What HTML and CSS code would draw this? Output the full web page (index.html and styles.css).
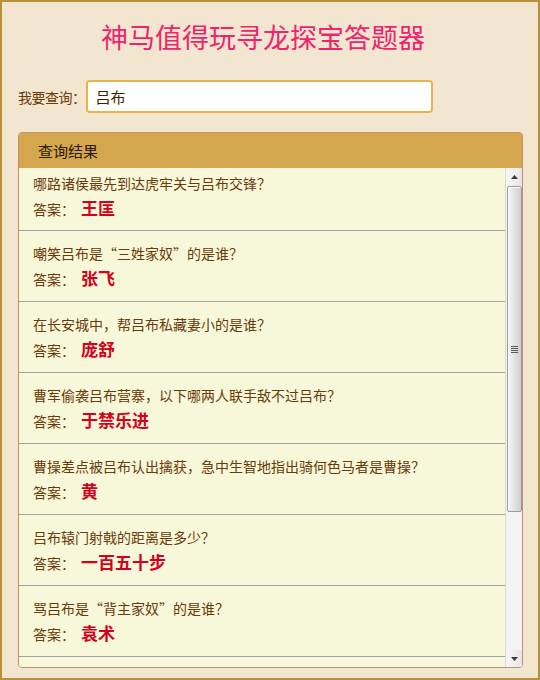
FILE: index.html
```html
<!DOCTYPE html>
<html lang="zh-CN">
<head>
  <meta charset="UTF-8">
  <title>神马值得玩寻龙探宝答题器</title>
  <link rel="stylesheet" href="styles.css">
</head>
<body>
  <div class="page">
    <h1 class="title">神马值得玩寻龙探宝答题器</h1>

    <!-- 查询框 -->
    <div class="search">
      <label for="keyword">我要查询：</label>
      <input id="keyword" type="text" value="吕布">
    </div>

    <!-- 查询结果 -->
    <div class="panel">
      <div class="panel-head">查询结果</div>
      <div class="panel-body">
        <div class="list">
          <div class="item">
            <p class="q">哪路诸侯最先到达虎牢关与吕布交锋？</p>
            <p class="a">答案：<b>王匡</b></p>
          </div>
          <div class="item">
            <p class="q">嘲笑吕布是“三姓家奴”的是谁？</p>
            <p class="a">答案：<b>张飞</b></p>
          </div>
          <div class="item">
            <p class="q">在长安城中，帮吕布私藏妻小的是谁？</p>
            <p class="a">答案：<b>庞舒</b></p>
          </div>
          <div class="item">
            <p class="q">曹军偷袭吕布营寨，以下哪两人联手敌不过吕布？</p>
            <p class="a">答案：<b>于禁乐进</b></p>
          </div>
          <div class="item">
            <p class="q">曹操差点被吕布认出擒获，急中生智地指出骑何色马者是曹操？</p>
            <p class="a">答案：<b>黄</b></p>
          </div>
          <div class="item">
            <p class="q">吕布辕门射戟的距离是多少？</p>
            <p class="a">答案：<b>一百五十步</b></p>
          </div>
          <div class="item">
            <p class="q">骂吕布是“背主家奴”的是谁？</p>
            <p class="a">答案：<b>袁术</b></p>
          </div>
        </div>

        <!-- 滚动条 -->
        <div class="scrollbar">
          <div class="sb-btn">
            <svg width="7" height="4" viewBox="0 0 7 4"><path d="M3.5 0 L7 4 L0 4 Z" fill="#3c3c3c"/></svg>
          </div>
          <div class="sb-track">
            <div class="sb-thumb">
              <span class="grip"></span>
            </div>
          </div>
          <div class="sb-btn sb-down">
            <svg width="7" height="4" viewBox="0 0 7 4"><path d="M0 0 L7 0 L3.5 4 Z" fill="#3c3c3c"/></svg>
          </div>
        </div>
      </div>
    </div>
  </div>
</body>
</html>
```

FILE: styles.css
```css
* {
  box-sizing: border-box;
}
body {
  margin: 0;
  font-family: "Noto Sans CJK SC", "Liberation Sans", sans-serif;
}
.page {
  width: 540px;
  height: 680px;
  border: 2px solid #b8903a;
  background: #f2e6d1;
  overflow: hidden;
}
.title {
  margin: 0;
  padding: 18px 14px 0 0;
  line-height: 34px;
  font-size: 27px;
  font-weight: normal;
  color: #f0236c;
  text-align: center;
}
.search {
  display: flex;
  align-items: center;
  margin-top: 26px;
  padding-left: 16px;
}
.search label {
  font-size: 14px;
  letter-spacing: -0.5px;
  color: #6b3a0a;
}
.search input {
  width: 347px;
  height: 33px;
  padding: 0 8px;
  border: 2px solid #e9b24a;
  border-radius: 4px;
  background: #fff;
  font-family: inherit;
  font-size: 15px;
  color: #3a2500;
  outline: none;
}
.panel {
  margin: 19px 15px 0 16px;
  height: 536px;
  border: 1px solid #c4906c;
  border-radius: 4px;
  overflow: hidden;
  display: flex;
  flex-direction: column;
}
.panel-head {
  height: 35px;
  line-height: 35px;
  padding-left: 19px;
  background: #d4a64e;
  font-size: 15px;
  color: #2a1a00;
}
.panel-body {
  flex: 1;
  display: flex;
  min-height: 0;
  background: #f7f7d9;
}
.list {
  flex: 1;
  overflow: hidden;
}
.item {
  height: 71px;
  padding: 11px 14px 0;
  border-bottom: 1px solid #a3a3a3;
}
.item:first-child {
  height: 63px;
  padding-top: 4px;
}
.item p {
  margin: 0;
  white-space: nowrap;
}
.q {
  line-height: 22px;
  font-size: 14px;
  color: #6b3a0a;
}
.a {
  margin-top: 2px;
  line-height: 28px;
  font-size: 14px;
  color: #6b3a0a;
}
.a b {
  margin-left: 6px;
  font-size: 17px;
  color: #d4001c;
}
.scrollbar {
  width: 17px;
  display: flex;
  flex-direction: column;
  background: #f1f1f1;
  border-left: 1px solid #dcdcdc;
}
.sb-btn {
  height: 18px;
  display: flex;
  align-items: center;
  justify-content: center;
  background: linear-gradient(to right, #f6f6f6, #e6e6e6);
}
.sb-down {
  height: 17px;
}
.sb-track {
  flex: 1;
  background: #f3f3f3;
}
.sb-thumb {
  height: 326px;
  margin: 0 0 0 1px;
  border: 1px solid #9a9a9a;
  border-radius: 2px;
  background: linear-gradient(to right, #f4f4f4, #e2e2e2 50%, #cfcfcf);
  box-shadow: inset 1px 1px 0 #fff;
  display: flex;
  align-items: center;
  justify-content: center;
}
.grip {
  width: 7px;
  height: 7px;
  background: repeating-linear-gradient(to bottom, #5a5a5a 0, #5a5a5a 1px, transparent 1px, transparent 2px);
}
```
